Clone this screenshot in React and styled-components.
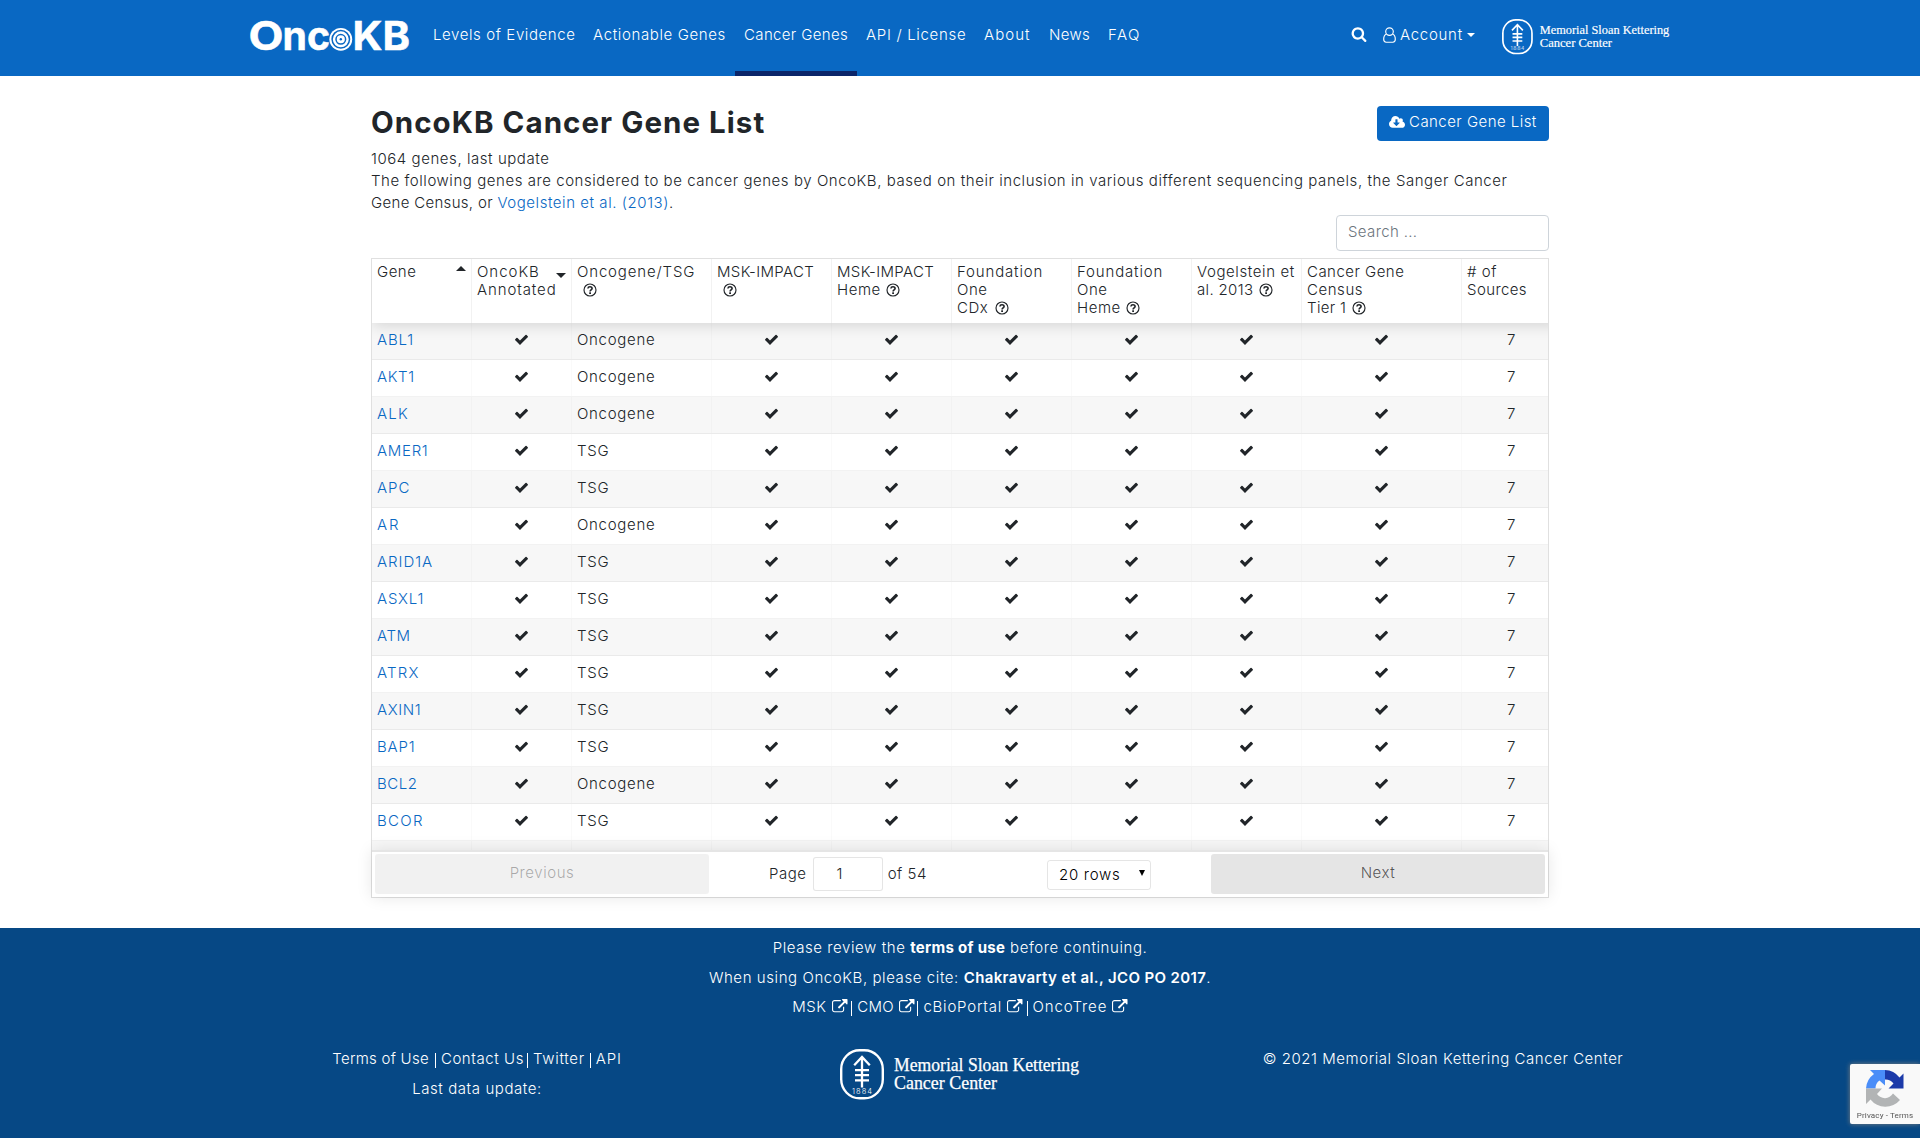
import React from 'react';
import styled, { createGlobalStyle } from 'styled-components';

const Global = createGlobalStyle`
  *, *::before, *::after { box-sizing: border-box; }
  body {
    margin: 0;
    background: #fff;
    color: #212529;
    font: 300 15px/22px Inter, 'Open Sans', sans-serif;
    letter-spacing: 0.555px;
    overflow: hidden;
  }
  a { color: #0968c3; text-decoration: none; }
  input, select, button { font: inherit; letter-spacing: inherit; }
`;

const T = styled.span`
  letter-spacing: ${(p) => p.$ls}px;
  white-space: nowrap;
`;

const Glyph = styled.svg`
  display: inline-block;
  flex: none;
  fill: currentColor;
  overflow: visible;
  width: ${(p) => p.$w || 15}px;
  height: ${(p) => p.$h || p.$w || 15}px;
`;

/* ---------- icons ---------- */
const Check = () => (
  <Glyph viewBox="0 0 1792 1792">
    <path d="M1671 566q0 40-28 68l-724 724-136 136q-28 28-68 28t-68-28l-136-136-362-362q-28-28-28-68t28-68l136-136q28-28 68-28t68 28l294 295 656-657q28-28 68-28t68 28l136 136q28 28 28 68z" />
  </Glyph>
);
const Search = () => (
  <Glyph viewBox="0 0 1792 1792" $w={16}>
    <path d="M1216 832q0-185-131.5-316.5t-316.5-131.5-316.5 131.5-131.5 316.5 131.5 316.5 316.5 131.5 316.5-131.5 131.5-316.5zm512 832q0 52-38 90t-90 38q-54 0-90-38l-343-342q-179 124-399 124-143 0-273.5-55.5t-225-150-150-225-55.5-273.5 55.5-273.5 150-225 225-150 273.5-55.5 273.5 55.5 225 150 150 225 55.5 273.5q0 220-124 399l343 343q37 37 37 90z" />
  </Glyph>
);
const User = () => (
  <Glyph viewBox="0 0 13 16" $w={13} $h={16}>
    <g fill="none" stroke="currentColor" strokeWidth="1.15">
      <circle cx="6.5" cy="4.6" r="3.8" />
      <path d="M3.2 7.3C1.4 8 .7 10 .7 12.3c0 1.7 1 2.9 2.5 2.9h6.6c1.5 0 2.5-1.2 2.5-2.9 0-2.3-.7-4.3-2.5-5" />
    </g>
  </Glyph>
);
const ExternalLink = () => (
  <Glyph viewBox="0 0 1792 1792" $w={15.5}>
    <path d="M1408 928v320q0 119-84.5 203.5t-203.5 84.5h-832q-119 0-203.5-84.5t-84.5-203.5v-832q0-119 84.5-203.5t203.5-84.5h704q14 0 23 9t9 23v64q0 14-9 23t-23 9h-704q-66 0-113 47t-47 113v832q0 66 47 113t113 47h832q66 0 113-47t47-113v-320q0-14 9-23t23-9h64q14 0 23 9t9 23zm384-864v512q0 26-19 45t-45 19-45-19l-176-176-652 652q-10 10-23 10t-23-10l-114-114q-10-10-10-23t10-23l652-652-176-176q-19-19-19-45t19-45 45-19h512q26 0 45 19t19 45z" />
  </Glyph>
);
const CloudDownload = () => (
  <Glyph viewBox="0 0 1920 1792" $w={16} $h={15}>
    <path d="M1280 928q0-14-9-23t-23-9h-224v-352q0-13-9.5-22.5t-22.5-9.5h-192q-13 0-22.5 9.5t-9.5 22.5v352h-224q-13 0-22.5 9.5t-9.5 22.5q0 14 9 23l352 352q9 9 23 9t23-9l351-351q10-12 10-24zm640 224q0 159-112.5 271.5t-271.5 112.5h-1088q-185 0-316.5-131.5t-131.5-316.5q0-130 70-240t188-165q-2-30-2-43 0-212 150-362t362-150q156 0 285.5 87t188.5 231q71-62 166-62 106 0 181 75t75 181q0 76-41 138 130 31 213.5 135.5t83.5 238.5z" />
  </Glyph>
);
const HelpGlyph = styled(Glyph)`
  margin-left: ${(p) => p.$ml}px;
  vertical-align: -2px;
`;
const Help = ({ ml = 6 }) => (
  <HelpGlyph viewBox="0 0 14 14" $w={14} $ml={ml}>
    <circle cx="7" cy="7" r="6" fill="none" stroke="currentColor" strokeWidth="1.15" />
    <path d="M4.9 5.5C5 4.3 5.9 3.8 7 3.8c1.2 0 2.1.7 2.1 1.7 0 1.4-2 1.5-2 3" fill="none" stroke="currentColor" strokeWidth="1.6" />
    <rect x="6.2" y="9.3" width="1.8" height="1.7" />
  </HelpGlyph>
);

/* ---------- logos ---------- */
const OncoLogo = () => (
  <Glyph viewBox="0 0 160 34" $w={160} $h={34}>
    <g fontFamily="Inter, sans-serif" fontWeight="700" fontSize="39.5" letterSpacing="0" stroke="currentColor" strokeWidth=".5">
      <text x="-1.5" y="31" textLength="35" lengthAdjust="spacingAndGlyphs">O</text>
      <text x="32.5" y="31" textLength="47.5" lengthAdjust="spacingAndGlyphs">nc</text>
      <text x="102.5" y="31" textLength="57.5" lengthAdjust="spacingAndGlyphs">KB</text>
    </g>
    <circle cx="90.8" cy="20.3" r="11.4" />
    <g fill="none" stroke="#0968c3" strokeWidth="1.5">
      <circle cx="90.8" cy="20.3" r="8.7" />
      <circle cx="90.8" cy="20.3" r="4.8" />
    </g>
    <circle cx="90.8" cy="20.3" r="1.2" fill="#0968c3" />
  </Glyph>
);

const MskLogo = ({ width }) => (
  <Glyph viewBox="0 0 240 51" $w={width} $h={(width * 51) / 240}>
    <rect x="1.2" y="1.2" width="41.6" height="48.1" rx="18.5" ry="19" fill="none" stroke="currentColor" strokeWidth="2.4" />
    <g fill="none" stroke="currentColor" strokeWidth="2.3">
      <path d="M22 8V38.5M14.2 16.2L22 8l7.8 8.2M15 21.2h14M15 26.2h14M15 31.4h14" />
    </g>
    <text x="12" y="45" fontFamily="Inter, sans-serif" fontSize="7.5" letterSpacing="0" textLength="20">1884</text>
    <g fontFamily="'Liberation Serif', serif" fontSize="17.8" fontWeight="400" letterSpacing="0" stroke="currentColor" strokeWidth=".25">
      <text x="54" y="22" textLength="185" lengthAdjust="spacingAndGlyphs">Memorial Sloan Kettering</text>
      <text x="54" y="40" textLength="103" lengthAdjust="spacingAndGlyphs">Cancer Center</text>
    </g>
  </Glyph>
);

/* ---------- header ---------- */
const Header = styled.header`
  display: flex;
  height: 76px;
  background: #0968c3;
  color: #fff;
  padding-left: 250px;
`;
const Brand = styled.a`
  display: flex;
  align-items: flex-start;
  width: 174px;
  padding-top: 19px;
  color: #fff;
`;
const Nav = styled.nav`
  display: flex;
  width: 927px;
`;
const NavItem = styled.a`
  width: ${(p) => p.$w}px;
  height: 76px;
  padding: 24px 0 0 9px;
  border-bottom: 5px solid ${(p) => (p.$active ? '#0b2569' : 'transparent')};
  color: #fff;
  letter-spacing: ${(p) => p.$ls}px;
  white-space: nowrap;
`;
const Tools = styled.div`
  display: flex;
  align-items: flex-start;
`;
const SearchLink = styled.a`
  display: flex;
  width: 32px;
  padding-top: 26px;
  color: #fff;
`;
const Account = styled.a`
  display: flex;
  align-items: center;
  gap: 4px;
  width: 119px;
  padding-top: 24px;
  color: #fff;
`;
const Caret = styled.i`
  border: 4.5px solid transparent;
  border-top-color: currentColor;
  border-bottom: 0;
`;
const MskLink = styled.a`
  display: flex;
  padding-top: 19px;
  color: #fff;
`;

const NAV = [
  ['Levels of Evidence', 160, 0.6],
  ['Actionable Genes', 151, 0.63],
  ['Cancer Genes', 122, 0.36, true],
  ['API / License', 118, 0.68],
  ['About', 65, 1.05],
  ['News', 59, 0.35],
  ['FAQ', 50, 1.5],
];

/* ---------- main ---------- */
const Main = styled.main`
  width: 1178px;
  height: 852px;
  margin: 0 auto;
  padding-top: 30px;
`;
const TitleRow = styled.div`
  display: flex;
  justify-content: space-between;
  align-items: flex-start;
  height: 42px;
`;
const Title = styled.h1`
  margin: 0;
  font-size: 29.5px;
  font-weight: 700;
  line-height: 33px;
  letter-spacing: 1.05px;
`;
const Download = styled.button`
  display: flex;
  align-items: center;
  gap: 4px;
  width: 172px;
  height: 35px;
  padding: 0 0 3px 12px;
  border: 0;
  border-radius: 4px;
  background: #0968c3;
  color: #fff;
  letter-spacing: 0.46px;
  white-space: nowrap;
`;
const Intro = styled.div`
  height: 67px;
`;
const SearchRow = styled.div`
  display: flex;
  justify-content: flex-end;
  height: 43px;
`;
const SearchInput = styled.input`
  width: 213px;
  height: 36px;
  padding: 0 12px 3px 11px;
  border: 1px solid #ced4da;
  border-radius: 4px;
  letter-spacing: 0.36px;
  outline: 0;
  &::placeholder { color: #6c757d; opacity: 1; }
`;

/* ---------- table ---------- */
const Table = styled.section`
  display: flex;
  flex-direction: column;
  width: 1178px;
  height: 640px;
  border: 1px solid rgba(0, 0, 0, 0.12);
`;
const Scroller = styled.div`
  height: 591px;
  overflow: hidden;
`;
const COLS = '100px 100px 140px 120px 120px 120px 120px 110px 160px 100px';
const Head = styled.div`
  position: relative;
  z-index: 1;
  display: grid;
  grid-template-columns: ${COLS};
  width: 1190px;
  height: 64px;
  box-shadow: 0 2px 15px 0 rgba(0, 0, 0, 0.15);
`;
const HeadCell = styled.div`
  display: flex;
  justify-content: space-between;
  padding: 4px 5px 0;
  border-right: 1px solid rgba(0, 0, 0, 0.05);
  line-height: 18px;
  white-space: nowrap;
  overflow: hidden;
`;
const Sort = styled.i`
  align-self: flex-start;
  flex: none;
  margin: ${(p) => (p.$up ? '3px 0 0' : '10px 0 0 -2px')};
  border: 5px solid transparent;
  ${(p) => (p.$up ? 'border-bottom-color: #212529; border-top: 0;' : 'border-top-color: #212529; border-bottom: 0;')}
`;
const Row = styled.div`
  display: grid;
  grid-template-columns: ${COLS};
  width: 1190px;
  height: 37px;
  border-bottom: 1px solid rgba(0, 0, 0, 0.05);
  background: ${(p) => (p.$odd ? 'rgba(0, 0, 0, 0.03)' : '#fff')};
`;
const Cell = styled.div`
  display: flex;
  align-items: center;
  justify-content: ${(p) => (p.$center ? 'center' : 'flex-start')};
  padding: 0 5px 3px;
  border-right: 1px solid rgba(0, 0, 0, 0.02);
`;
const Kind = styled(Cell)`
  letter-spacing: 0.7px;
`;
const Pager = styled.div`
  position: relative;
  z-index: 1;
  display: flex;
  align-items: flex-start;
  height: 47px;
  padding: 2px 3px 3px;
  border-top: 2px solid rgba(0, 0, 0, 0.1);
  background: #fff;
  box-shadow: 0 0 15px 0 rgba(0, 0, 0, 0.1);
`;
const PageButton = styled.button`
  width: 334px;
  height: 40px;
  padding: 0 0 2px;
  border: 0;
  border-radius: 3px;
  background: rgba(0, 0, 0, 0.1);
  color: rgba(0, 0, 0, 0.65);
  &:disabled { opacity: 0.5; }
`;
const PagerCenter = styled.div`
  display: flex;
  align-items: center;
  flex: 1;
  height: 40px;
  padding: 0 0 1px 60px;
`;
const PageInput = styled.input`
  width: 70px;
  height: 34px;
  margin: 0 5px 0 6px;
  padding: 0 16px 1px 0;
  border: 1px solid rgba(0, 0, 0, 0.1);
  border-radius: 3px;
  color: #212529;
  text-align: center;
`;
const RowsSelect = styled.div`
  display: flex;
  align-items: center;
  justify-content: space-between;
  width: 104px;
  height: 30px;
  margin: 2px 0 0 120px;
  padding: 0 5px 0 11px;
  border: 1px solid rgba(0, 0, 0, 0.1);
  border-radius: 3px;
  color: #000;
  letter-spacing: 0.72px;
  white-space: nowrap;
`;
const SelectArrow = styled.i`
  border: 3.5px solid transparent;
  border-top: 6px solid #000;
  border-bottom: 0;
  margin-bottom: 3px;
`;

const HEADS = [
  <><T $ls={0.5}>Gene</T><Sort $up /></>,
  <><span><T $ls={0.98}>OncoKB</T><br /><T $ls={0.9}>Annotated</T></span><Sort /></>,
  <span><T $ls={0.84}>Oncogene/TSG</T><br /><Help /></span>,
  <span><T $ls={0.33}>MSK-IMPACT</T><br /><Help /></span>,
  <span><T $ls={0.33}>MSK-IMPACT</T><br />Heme<Help ml={5} /></span>,
  <span><T $ls={0.84}>Foundation</T><br />One<br />CDx<Help ml={7} /></span>,
  <span><T $ls={0.84}>Foundation</T><br />One<br />Heme<Help ml={5} /></span>,
  <span><T $ls={0.6}>Vogelstein et</T><br /><T $ls={0.34}>al. 2013</T><Help ml={6} /></span>,
  <span><T $ls={0.48}>Cancer Gene</T><br />Census<br /><T $ls={0.34}>Tier 1</T><Help ml={6} /></span>,
  <span># of<br /><T $ls={0.4}>Sources</T></span>,
];

const GENES = [
  ['ABL1', 'Oncogene', 0.85], ['AKT1', 'Oncogene', 0.65], ['ALK', 'Oncogene', 1.2], ['AMER1', 'TSG', 0.7],
  ['APC', 'TSG', 1], ['AR', 'Oncogene', 1.8], ['ARID1A', 'TSG', 0.95], ['ASXL1', 'TSG', 0.8],
  ['ATM', 'TSG', 0.6], ['ATRX', 'TSG', 1.2], ['AXIN1', 'TSG', 0.6], ['BAP1', 'TSG', 0.8],
  ['BCL2', 'Oncogene', 0.5], ['BCOR', 'TSG', 1.3],
];

/* ---------- footer ---------- */
const Footer = styled.footer`
  height: 210px;
  padding-top: 9px;
  background: #064885;
  color: #fff;
  a { color: inherit; }
`;
const Line = styled.div`
  display: flex;
  align-items: center;
  justify-content: center;
  height: ${(p) => p.$h}px;
  line-height: 22px;
  letter-spacing: 0.58px;
  white-space: pre;
`;
const Strong = styled.a`
  font-weight: ${(p) => p.$weight};
  letter-spacing: ${(p) => p.$ls}px;
`;
const Ext = styled.a`
  display: inline-flex;
  align-items: center;
  gap: 5px;
  letter-spacing: ${(p) => p.$ls}px;
`;
const Bar = styled.i`
  width: 1px;
  height: 15px;
  margin: 2px 5px 0 ${(p) => (p.$l === undefined ? 4 : p.$l)}px;
  background: #fff;
`;
const Columns = styled.div`
  display: grid;
  grid-template-columns: 420px 1fr 420px;
  width: 1382px;
  margin: 20px auto 0;
`;
const Center = styled.div`
  display: flex;
  flex-direction: column;
  align-items: center;
`;
const LeftCol = styled(Center)`
  width: 416px;
`;
const LogoCol = styled(Center)`
  padding-top: 12px;
`;
const RightCol = styled(Center)`
  padding-left: 4px;
`;

/* ---------- recaptcha ---------- */
const Badge = styled.aside`
  position: fixed;
  right: 0;
  bottom: 14px;
  display: flex;
  flex-direction: column;
  align-items: center;
  width: 70px;
  height: 60px;
  padding-top: 6px;
  border-radius: 2px 0 0 2px;
  background: #f9f9f9;
  box-shadow: 0 0 5px gray;
`;
const BadgeText = styled.div`
  margin-top: 2px;
  color: #555;
  font: 400 8px/11px Roboto, sans-serif;
  letter-spacing: 0.14px;
  white-space: nowrap;
`;

export default function App() {
  return (
    <>
      <Global />
      <Header>
        <Brand><OncoLogo /></Brand>
        <Nav>
          {NAV.map(([label, w, ls, active]) => (
            <NavItem key={label} $w={w} $ls={ls} $active={active}>{label}</NavItem>
          ))}
        </Nav>
        <Tools>
          <SearchLink><Search /></SearchLink>
          <Account><User /><T $ls={0.72}>Account</T><Caret /></Account>
          <MskLink><MskLogo width={168} /></MskLink>
        </Tools>
      </Header>
      <Main>
        <TitleRow>
          <Title>OncoKB Cancer Gene List</Title>
          <Download><CloudDownload />Cancer Gene List</Download>
        </TitleRow>
        <Intro>
          <div>1064 genes, last update</div>
          <div>
            The following genes are considered to be cancer genes by OncoKB, based on their inclusion in
            various different sequencing panels, the Sanger Cancer <T $ls={0.32}>Gene Census, or </T>
            <a>Vogelstein et al. (2013)</a>.
          </div>
        </Intro>
        <SearchRow><SearchInput placeholder="Search ..." /></SearchRow>
        <Table>
          <Scroller>
            <Head>{HEADS.map((h, i) => <HeadCell key={i}>{h}</HeadCell>)}</Head>
            {GENES.map(([gene, kind, ls], i) => (
              <Row key={gene} $odd={i % 2 === 0}>
                <Cell><a><T $ls={ls}>{gene}</T></a></Cell>
                <Cell $center><Check /></Cell>
                <Kind>{kind}</Kind>
                {[3, 4, 5, 6, 7, 8].map((c) => <Cell key={c} $center><Check /></Cell>)}
                <Cell $center>7</Cell>
              </Row>
            ))}
            <Row $odd>{HEADS.map((_, i) => <Cell key={i} />)}</Row>
          </Scroller>
          <Pager>
            <PageButton disabled>Previous</PageButton>
            <PagerCenter>
              Page
              <PageInput defaultValue="1" />
              of 54
              <RowsSelect>20 rows<SelectArrow /></RowsSelect>
            </PagerCenter>
            <PageButton>Next</PageButton>
          </Pager>
        </Table>
      </Main>
      <Footer>
        <Line $h={22}>Please review the <Strong $weight={700} $ls={0.29}>terms of use</Strong> before continuing.</Line>
        <Line $h={38}>When using OncoKB, please cite: <Strong $weight={600} $ls={0.37}>Chakravarty et al., JCO PO 2017</Strong>.</Line>
        <Line $h={20}>
          <Ext $ls={0.6}>MSK<ExternalLink /></Ext><Bar />
          <Ext $ls={0.3}>CMO<ExternalLink /></Ext><Bar $l={3} />
          <Ext $ls={0.8}>cBioPortal<ExternalLink /></Ext><Bar />
          <Ext $ls={0.9}>OncoTree<ExternalLink /></Ext>
        </Line>
        <Columns>
          <LeftCol>
            <Line $h={44}>
              <T $ls={0.26}>Terms of Use</T><Bar $l={6} /><a>Contact Us</a><Bar $l={3} />
              <T $ls={0.7}>Twitter</T><Bar $l={5} /><T $ls={0.8}>API</T>
            </Line>
            <Line $h={16}>Last data update:</Line>
          </LeftCol>
          <LogoCol><MskLogo width={240} /></LogoCol>
          <RightCol><Line $h={44}><T $ls={0.55}>© 2021 Memorial Sloan Kettering Cancer Center</T></Line></RightCol>
        </Columns>
      </Footer>
      <Badge>
        <Glyph viewBox="0 0 38 38" $w={38}>
          <path d="M19 0A19 19 0 0 1 33.5 7.5L37.5 3.5V18.5H22.5L27.5 13.5A10 10 0 0 0 19 9.5z" fill="#1c3aa9" />
          <path d="M19 0H4L8 4A19 19 0 0 0 0 18.5H9.5A9.5 9.5 0 0 1 13.5 10.5L19 15.5z" fill="#4a8df8" />
          <path d="M0 18.5V34L4.5 29.5A19 19 0 0 0 34 30L27 23.5A9.5 9.5 0 0 1 11 24L16 18.5z" fill="#b2b4b5" />
        </Glyph>
        <BadgeText>Privacy - Terms</BadgeText>
      </Badge>
    </>
  );
}
